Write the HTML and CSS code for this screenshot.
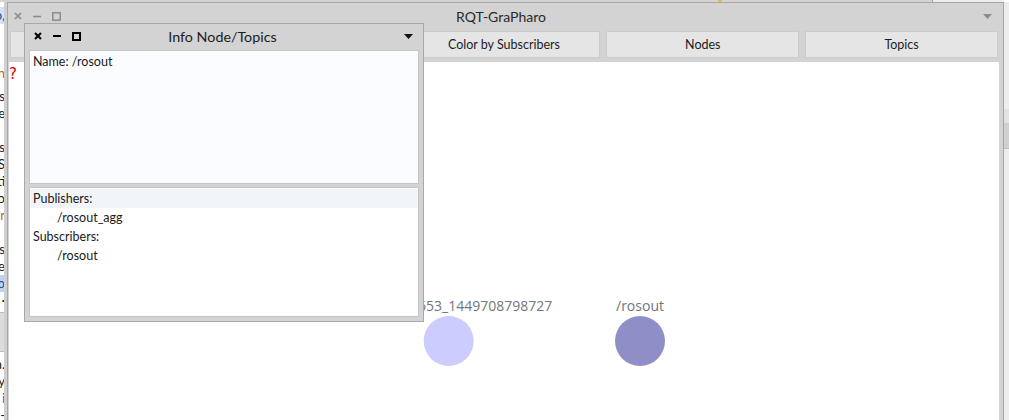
FILE: index.html
```html
<!DOCTYPE html>
<html>
<head>
<meta charset="utf-8">
<title>RQT-GraPharo</title>
<link rel="stylesheet" href="styles.css">
</head>
<body>
<div class="desktop">
  <div class="bgwin">
    <div class="bg-title"><span class="bg-title-text">Playground</span><span class="bg-icon"></span></div>
    <div class="bg-body">
      <div class="bg-lines">
        <div class="ln ln-sel first">foo,</div>
        <div class="ln ln-orange second">Transcription</div>
        <div class="ln">series</div>
        <div class="ln">some</div>
        <div class="ln"></div>
        <div class="ln">class</div>
        <div class="ln">GraS</div>
        <div class="ln">tti</div>
        <div class="ln">do</div>
        <div class="ln ln-orange">Pr</div>
        <div class="ln"></div>
        <div class="ln">class</div>
        <div class="ln">de</div>
        <div class="ln ln-hl">do</div>
        <div class="ln">·</div>
        <div class="bg-pane"></div>
        <div class="ln">a.</div>
        <div class="ln">y</div>
        <div class="ln ln-blue">i</div>
        <div class="ln">-</div>
      </div>
    </div>
  </div>

  <div class="bgright">
    <div class="br-top"></div>
    <div class="br-gap"></div>
    <div class="br-track"></div>
    <div class="br-thumb"></div>
  </div>

  <div class="win main">
    <div class="titlebar">
      <div class="tb-icons">
        <svg class="ic" width="8" height="8" viewBox="0 0 8 8"><path d="M1 1L7 7M7 1L1 7" stroke="#8c8c8c" stroke-width="1.7"/></svg>
        <svg class="ic" width="8" height="8" viewBox="0 0 8 8"><path d="M0 4.5H8" stroke="#8c8c8c" stroke-width="1.6"/></svg>
        <svg class="ic" width="9" height="9" viewBox="0 0 9 9"><rect x="0.8" y="0.8" width="7.4" height="7.4" fill="none" stroke="#8c8c8c" stroke-width="1.5"/></svg>
      </div>
      <div class="tb-title">RQT-GraPharo</div>
      <div class="tb-menu"><svg width="9" height="5" viewBox="0 0 9 5"><path d="M0 0H9L4.5 5Z" fill="#8c8c8c"/></svg></div>
    </div>
    <div class="toolbar">
      <div class="btn">Refresh</div>
      <div class="btn">Color by Publishers</div>
      <div class="btn">Color by Subscribers</div>
      <div class="btn">Nodes</div>
      <div class="btn">Topics</div>
    </div>
    <div class="canvas">
      <div class="qmark">?</div>
      <div class="node node-a">
        <div class="node-label">/rqt_gui_13653_1449708798727</div>
        <div class="dot dot-light"></div>
      </div>
      <div class="node node-b">
        <div class="node-label">/rosout</div>
        <div class="dot dot-dark"></div>
      </div>
    </div>
  </div>

  <div class="win info">
    <div class="info-title">
      <div class="tb-icons info-icons">
        <svg class="ic" width="8" height="8" viewBox="0 0 8 8"><path d="M1 1L7 7M7 1L1 7" stroke="#000" stroke-width="2"/></svg>
        <svg class="ic" width="8" height="8" viewBox="0 0 8 8"><path d="M0 4H8" stroke="#000" stroke-width="2"/></svg>
        <svg class="ic" width="9" height="9" viewBox="0 0 9 9"><rect x="1" y="1" width="7" height="7" fill="none" stroke="#000" stroke-width="2"/></svg>
      </div>
      <div class="tb-title info-name">Info Node/Topics</div>
      <div class="tb-menu"><svg width="9" height="5" viewBox="0 0 9 5"><path d="M0 0H9L4.5 5Z" fill="#111"/></svg></div>
    </div>
    <div class="panel panel-name">
      <div class="row">Name: /rosout</div>
    </div>
    <div class="panel panel-tree">
      <div class="row row-sel">Publishers:</div>
      <div class="row row-child">/rosout_agg</div>
      <div class="row">Subscribers:</div>
      <div class="row row-child">/rosout</div>
    </div>
  </div>
</div>
</body>
</html>
```

FILE: styles.css
```css
html, body {
  margin: 0;
  padding: 0;
}
body {
  background: #ededed;
  font-family: Lato, "Noto Sans", "DejaVu Sans", sans-serif;
  color: #222;
}
.desktop {
  position: relative;
  width: 1009px;
  height: 420px;
  overflow: hidden;
  background: #ededed;
}

/* background playground window */
.bgwin {
  position: absolute;
  left: -540px;
  top: -26px;
  width: 1472px;
  height: 470px;
  background: #d3d3d3;
  border-right: 1px solid #a8a8a8;
  display: flex;
  flex-direction: column;
}
.bg-title {
  height: 28px;
  display: flex;
  align-items: flex-end;
  justify-content: center;
  padding-left: 578px;
  font-size: 14px;
  line-height: 22px;
  color: #333;
}
.bg-icon {
  width: 4px;
  height: 3px;
  background: #e5c15a;
  margin-left: 400px;
}
.bg-body {
  flex: 1;
  background: #fff;
  display: flex;
}
.bg-lines {
  width: 545px;
  display: flex;
  flex-direction: column;
  align-items: flex-end;
  font-size: 13px;
  line-height: 17px;
}
.ln {
  height: 17px;
  white-space: nowrap;
}
.ln.first {
  margin-top: 5px;
  color: #1f4ea0;
  background: #d4e3f6;
}
.ln.second {
  margin-top: 41px;
  margin-bottom: 6px;
}
.ln-orange {
  color: #b46a00;
}
.ln-hl {
  background: #bcd3ef;
  color: #1f4ea0;
}
.ln-blue {
  color: #1f5fc0;
}
.bg-pane {
  align-self: stretch;
  height: 38px;
  margin: 3px 0 4px;
  background: #dcdcdc;
  border-top: 1px solid #bfbfbf;
  border-bottom: 1px solid #bfbfbf;
}

/* right background strip */
.bgright {
  position: absolute;
  left: 1004px;
  top: 0;
  width: 10px;
  height: 420px;
  display: flex;
  flex-direction: column;
  background: #ededed;
}
.br-top {
  height: 2px;
  background: #fff;
}
.br-gap {
  height: 107px;
}
.br-track {
  height: 14px;
  background: #e3e3e3;
}
.br-thumb {
  height: 25px;
  background: #d0d0d0;
  border-bottom: 1px solid #bdbdbd;
}

/* windows */
.win {
  position: absolute;
  box-sizing: border-box;
  background: #d3d3d3;
  border: 1px solid #a6a6a6;
  display: flex;
  flex-direction: column;
}
.main {
  left: 7px;
  top: 2px;
  width: 997px;
  height: 440px;
  box-shadow: -3px 0 0 #cfcfcf;
}
.titlebar {
  box-sizing: border-box;
  height: 28px;
  display: grid;
  grid-template-columns: 1fr auto 1fr;
  align-items: center;
  padding: 0 11px 2px 6px;
}
.tb-icons {
  display: flex;
  align-items: center;
  gap: 11px;
}
.ic {
  display: block;
}
.tb-title {
  font-size: 14px;
  color: #2a2a2a;
  padding-right: 4px;
}
.tb-menu {
  justify-self: end;
  display: flex;
}
.toolbar {
  height: 27px;
  display: flex;
  gap: 6px;
  padding: 0 5px 0 2px;
}
.btn {
  flex: 1;
  box-sizing: border-box;
  background: #e5e5e5;
  border: 1px solid #cbcbcb;
  display: flex;
  align-items: center;
  justify-content: center;
  padding-bottom: 1px;
  font-size: 12.5px;
  color: #1d1d1d;
}
.canvas {
  flex: 1;
  margin: 4px 4px 0 1px;
  background: #fff;
  position: relative;
}
.qmark {
  position: absolute;
  left: 0;
  top: 3px;
  color: #e00000;
  font-size: 15px;
  font-family: "DejaVu Sans", sans-serif;
}
.node {
  position: absolute;
  top: 234px;
  display: flex;
  flex-direction: column;
  align-items: center;
  transform: translateX(-50%);
}
.node-a {
  left: 440px;
}
.node-b {
  left: 631px;
}
.node-label {
  height: 20px;
  line-height: 19px;
  font-family: "Open Sans", Lato, sans-serif;
  font-size: 14px;
  color: #6f7780;
  white-space: nowrap;
}
.dot {
  width: 50px;
  height: 50px;
  border-radius: 50%;
}
.dot-light {
  background: #ccccff;
}
.dot-dark {
  background: #8f8fc8;
}

/* info window */
.info {
  left: 24px;
  top: 23px;
  width: 400px;
  height: 299px;
  border-color: #a9a9a9;
  padding: 0 4px 4px 4px;
  gap: 3px;
}
.info-title {
  box-sizing: border-box;
  height: 26px;
  margin-bottom: -3px;
  display: grid;
  grid-template-columns: 1fr auto 1fr;
  align-items: center;
  padding: 0 6px 2px 5px;
}
.info-icons {
  gap: 11px;
}
.info-name {
  font-size: 14.3px;
  color: #1c1c1c;
  padding-right: 2px;
}
.panel {
  box-sizing: border-box;
  background: #fff;
  border: 1px solid #c5c5c5;
  font-size: 12.5px;
  color: #1a1a1a;
}
.panel-name {
  height: 134px;
  padding-top: 1px;
  background: #fbfcff;
}
.panel-tree {
  flex: 1;
  padding-top: 1px;
}
.row {
  height: 19px;
  line-height: 20px;
  padding-left: 3px;
}
.row-sel {
  background: #f1f4f9;
}
.row-child {
  padding-left: 27px;
}
```
